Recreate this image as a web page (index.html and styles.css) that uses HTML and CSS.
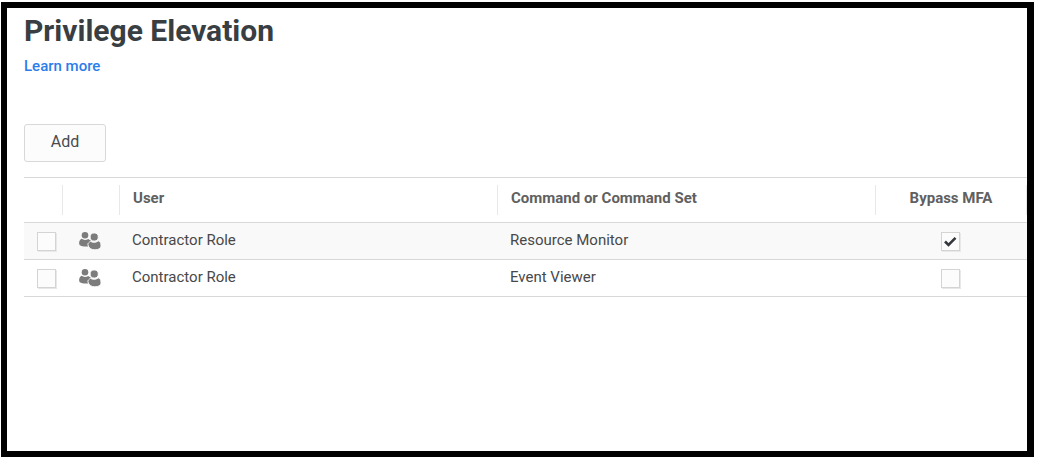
FILE: index.html
```html
<!DOCTYPE html>
<html lang="en">
<head>
<meta charset="utf-8">
<title>Privilege Elevation</title>
<link rel="stylesheet" href="styles.css">
</head>
<body>
<svg class="sprite" aria-hidden="true">
  <symbol id="group" viewBox="0 0 22 18">
    <circle cx="6" cy="3.300" r="3.300"/>
    <path d="M2.600 6.800C.2 7.600-.6 11.800 .8 13.200C2.800 14.600 7 14.800 11 14.200L12 8.800L9.200 7C7.200 8.300 4.400 8.300 2.600 6.800Z"/>
    <circle class="front" cx="15.200" cy="5" r="4.100"/>
    <path class="front" d="M11.400 9.200C10.200 10.800 8.600 11 8.900 12.800C9.600 16.200 12.500 17.800 15.800 17.800C19.200 17.800 22 16.500 22 13.500C22 11 21.200 9.400 19.200 8.800C17.200 10.700 13.500 10.800 11.400 9.200Z"/>
  </symbol>
</svg>
<main class="page">
  <h1 class="title">Privilege Elevation</h1>
  <a class="learn" href="#">Learn more</a>
  <div class="toolbar"><button class="add" type="button">Add</button></div>
  <table class="grid">
    <colgroup>
      <col class="col-check"><col class="col-icon"><col><col><col class="col-mfa">
    </colgroup>
    <thead>
      <tr>
        <th><div class="head"></div></th>
        <th><div class="head"></div></th>
        <th><div class="head">User</div></th>
        <th><div class="head">Command or Command Set</div></th>
        <th><div class="head center">Bypass MFA</div></th>
      </tr>
    </thead>
    <tbody>
      <tr>
        <td class="pick"><input class="box" type="checkbox" aria-label="Select Resource Monitor"></td>
        <td class="kind"><svg class="icon" role="img" aria-label="Role"><use href="#group"/></svg></td>
        <td class="text">Contractor Role</td>
        <td class="text">Resource Monitor</td>
        <td class="mfa"><input class="box" type="checkbox" checked aria-label="Bypass MFA for Resource Monitor"></td>
      </tr>
      <tr>
        <td class="pick"><input class="box" type="checkbox" aria-label="Select Event Viewer"></td>
        <td class="kind"><svg class="icon" role="img" aria-label="Role"><use href="#group"/></svg></td>
        <td class="text">Contractor Role</td>
        <td class="text">Event Viewer</td>
        <td class="mfa"><input class="box" type="checkbox" aria-label="Bypass MFA for Event Viewer"></td>
      </tr>
    </tbody>
  </table>
</main>
</body>
</html>
```
FILE: styles.css
```css
* { box-sizing: border-box; }

body {
  margin: 0;
  padding: 2px 3px 0 1px;
  min-height: 100vh;
  display: flex;
  background: #fff;
  color: #484848;
  font-family: Roboto, "Liberation Sans", sans-serif;
  font-size: 15px;
}

.sprite { position: absolute; width: 0; height: 0; }

.page {
  flex: 1;
  min-width: 0;
  border: 6px solid #000;
  border-right-width: 7px;
  padding: 4px 0 16px 17px;
}

.title {
  margin: 0;
  font-size: 30px;
  line-height: 38px;
  font-weight: 700;
  color: #383e42;
}

.learn {
  display: inline-block;
  margin-top: 6px;
  font-size: 15px;
  line-height: 20px;
  font-weight: 500;
  color: #2b7de9;
  text-decoration: none;
}

.toolbar { padding: 48px 0 15px; }

.add {
  display: block;
  width: 82px;
  height: 38px;
  padding: 0 0 4px;
  border: 1px solid #d8d8d8;
  border-radius: 3px;
  background: #fcfcfc;
  color: #484c50;
  font: 16px Roboto, "Liberation Sans", sans-serif;
}

.grid {
  width: 100%;
  table-layout: fixed;
  border-collapse: separate;
  border-spacing: 0;
  border-top: 1px solid #d8d8d8;
}

.col-check { width: 39px; }
.col-icon { width: 57px; }
.col-mfa { width: 151px; }

th {
  height: 45px;
  padding: 0;
  border-bottom: 1px solid #d8d8d8;
  text-align: left;
}

.head {
  height: 30px;
  padding: 0 13px;
  border-right: 1px solid #e8e8e8;
  font-size: 15px;
  line-height: 27px;
  font-weight: 700;
  color: #606060;
}

.head.center { padding: 0; text-align: center; }

td {
  height: 37px;
  padding: 0;
  border-bottom: 1px solid #d8d8d8;
  vertical-align: middle;
}

tbody tr:nth-child(odd) { background: #f9f9f9; }

.text { padding: 0 12px 3px; }
.pick { padding-left: 13px; }
.kind { padding-left: 16px; }
.mfa { padding-right: 2px; text-align: center; }

.box {
  appearance: none;
  display: inline-block;
  width: 19px;
  height: 19px;
  margin: 0;
  border: 1px solid #d4d4d4;
  box-shadow: 1px 1px 0 #e8e8e8;
  background: #fcfcfc;
  vertical-align: middle;
}

.box:checked {
  background: #fcfcfc url("data:image/svg+xml,%3Csvg xmlns='http://www.w3.org/2000/svg' viewBox='0 0 17 17'%3E%3Cpath d='M3 8.500L6.500 12L13.500 4.800' fill='none' stroke='%2334383c' stroke-width='2.600'/%3E%3C/svg%3E") center / 17px 17px no-repeat;
}

.icon {
  display: block;
  width: 22px;
  height: 18px;
  fill: #7c7c7c;
}

.front { stroke: #f9f9f9; stroke-width: 1; }
```
